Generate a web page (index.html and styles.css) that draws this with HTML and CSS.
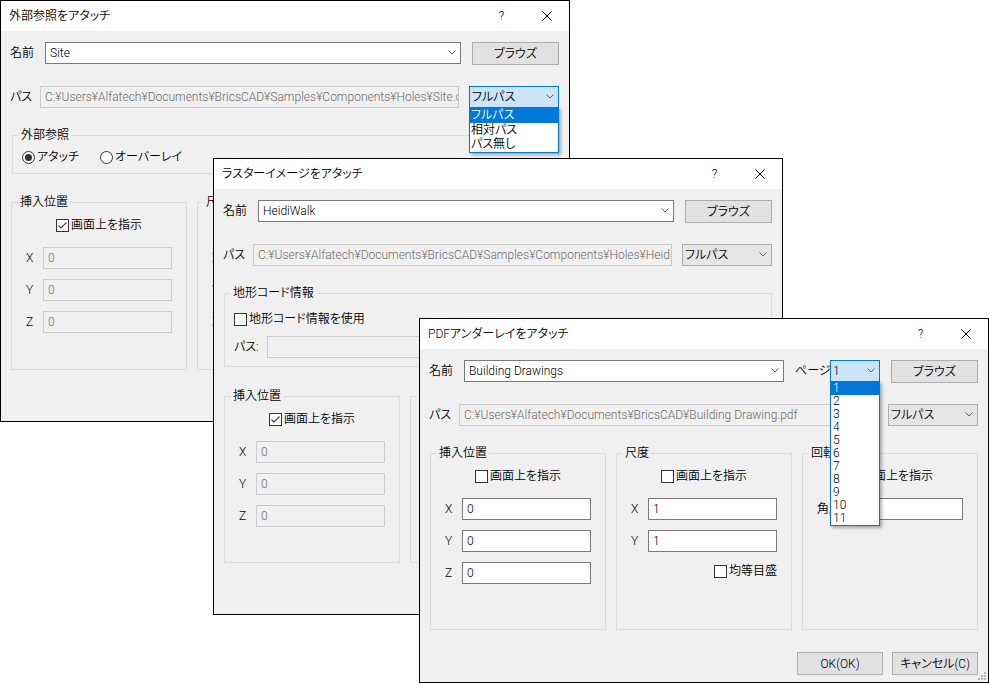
FILE: index.html
```html
<!DOCTYPE html>
<html lang="ja">
<head>
<meta charset="utf-8">
<title>アタッチ</title>
<link rel="stylesheet" href="styles.css">
</head>
<body>
<div class="desk">

<!-- Dialog 1 -->
<section class="dlg d1">
  <header class="tb">
    <span class="ttl">外部参照をアタッチ</span>
    <span class="help">?</span>
    <span class="close"><svg width="10" height="10" viewBox="0 0 10 10"><path d="M0.5 0.5L9.5 9.5M9.5 0.5L0.5 9.5" stroke="#000" stroke-width="1"/></svg></span>
  </header>
  <div class="bd">
    <div class="row">
      <span class="lbl l35">名前</span>
      <div class="combo w-name">Site<svg class="chev" width="8" height="5" viewBox="0 0 8 5"><polyline points="0.5,0.5 4,4 7.5,0.5" fill="none" stroke="#606060"/></svg></div>
      <button class="btn browse">ブラウズ</button>
    </div>
    <div class="row r2">
      <span class="lbl l30">パス</span>
      <div class="field dis w-path">C:¥Users¥Alfatech¥Documents¥BricsCAD¥Samples¥Components¥Holes¥Site.dwg</div>
      <div class="combo sel focus w-mode">フルパス<svg class="chev" width="8" height="5" viewBox="0 0 8 5"><polyline points="0.5,0.5 4,4 7.5,0.5" fill="none" stroke="#606060"/></svg>
        <ul class="list l-mode">
          <li class="on">フルパス</li>
          <li>相対パス</li>
          <li>パス無し</li>
        </ul>
      </div>
    </div>
    <fieldset class="grp g-xref">
      <legend>外部参照</legend>
      <div class="radios">
        <span class="opt o1"><i class="radio on"></i>アタッチ</span>
        <span class="opt"><i class="radio"></i>オーバーレイ</span>
      </div>
    </fieldset>
    <div class="grps">
      <fieldset class="grp">
        <legend>挿入位置</legend>
        <div class="chkrow"><span class="chk"><i class="box"><svg width="11" height="11" viewBox="0 0 11 11"><polyline points="1.5,5.5 4,8 9.5,2.5" fill="none" stroke="#444" stroke-width="1.2"/></svg></i>画面上を指示</span></div>
        <div class="frows">
          <div class="frow"><span class="flbl">X</span><div class="field dis w-num">0</div></div>
          <div class="frow"><span class="flbl">Y</span><div class="field dis w-num">0</div></div>
          <div class="frow"><span class="flbl">Z</span><div class="field dis w-num">0</div></div>
        </div>
      </fieldset>
      <fieldset class="grp">
        <legend>尺度</legend>
        <div class="chkrow"><span class="chk"><i class="box"><svg width="11" height="11" viewBox="0 0 11 11"><polyline points="1.5,5.5 4,8 9.5,2.5" fill="none" stroke="#444" stroke-width="1.2"/></svg></i>画面上を指示</span></div>
        <div class="frows">
          <div class="frow"><span class="flbl">X</span><div class="field dis w-num">1</div></div>
          <div class="frow"><span class="flbl">Y</span><div class="field dis w-num">1</div></div>
          <div class="frow"><span class="flbl">Z</span><div class="field dis w-num">1</div></div>
        </div>
      </fieldset>
      <fieldset class="grp">
        <legend>回転</legend>
        <div class="chkrow"><span class="chk"><i class="box"><svg width="11" height="11" viewBox="0 0 11 11"><polyline points="1.5,5.5 4,8 9.5,2.5" fill="none" stroke="#444" stroke-width="1.2"/></svg></i>画面上を指示</span></div>
        <div class="frows">
          <div class="frow"><span class="flbl wide">角度</span><div class="field dis w-ang">0</div></div>
        </div>
      </fieldset>
    </div>
  </div>
</section>

<!-- Dialog 2 -->
<section class="dlg d2">
  <header class="tb">
    <span class="ttl">ラスターイメージをアタッチ</span>
    <span class="help">?</span>
    <span class="close"><svg width="10" height="10" viewBox="0 0 10 10"><path d="M0.5 0.5L9.5 9.5M9.5 0.5L0.5 9.5" stroke="#000" stroke-width="1"/></svg></span>
  </header>
  <div class="bd">
    <div class="row">
      <span class="lbl l35">名前</span>
      <div class="combo w-name">HeidiWalk<svg class="chev" width="8" height="5" viewBox="0 0 8 5"><polyline points="0.5,0.5 4,4 7.5,0.5" fill="none" stroke="#606060"/></svg></div>
      <button class="btn browse">ブラウズ</button>
    </div>
    <div class="row r2">
      <span class="lbl l30">パス</span>
      <div class="field dis w-path">C:¥Users¥Alfatech¥Documents¥BricsCAD¥Samples¥Components¥Holes¥HeidiWalk.jpg</div>
      <div class="combo sel w-mode">フルパス<svg class="chev" width="8" height="5" viewBox="0 0 8 5"><polyline points="0.5,0.5 4,4 7.5,0.5" fill="none" stroke="#606060"/></svg></div>
    </div>
    <fieldset class="grp g-geo">
      <legend>地形コード情報</legend>
      <div class="georow"><span class="chk"><i class="box"></i>地形コード情報を使用</span></div>
      <div class="geo-path"><span class="lbl">パス:</span><div class="field dis gp-field"></div></div>
    </fieldset>
    <div class="grps">
      <fieldset class="grp">
        <legend>挿入位置</legend>
        <div class="chkrow"><span class="chk"><i class="box"><svg width="11" height="11" viewBox="0 0 11 11"><polyline points="1.5,5.5 4,8 9.5,2.5" fill="none" stroke="#444" stroke-width="1.2"/></svg></i>画面上を指示</span></div>
        <div class="frows">
          <div class="frow"><span class="flbl">X</span><div class="field dis w-num">0</div></div>
          <div class="frow"><span class="flbl">Y</span><div class="field dis w-num">0</div></div>
          <div class="frow"><span class="flbl">Z</span><div class="field dis w-num">0</div></div>
        </div>
      </fieldset>
      <fieldset class="grp">
        <legend>尺度</legend>
        <div class="chkrow"><span class="chk"><i class="box"><svg width="11" height="11" viewBox="0 0 11 11"><polyline points="1.5,5.5 4,8 9.5,2.5" fill="none" stroke="#444" stroke-width="1.2"/></svg></i>画面上を指示</span></div>
        <div class="frows">
          <div class="frow"><span class="flbl">X</span><div class="field dis w-num">1</div></div>
          <div class="frow"><span class="flbl">Y</span><div class="field dis w-num">1</div></div>
        </div>
      </fieldset>
      <fieldset class="grp">
        <legend>回転</legend>
        <div class="chkrow"><span class="chk"><i class="box"></i>画面上を指示</span></div>
        <div class="frows">
          <div class="frow"><span class="flbl wide">角度</span><div class="field w-ang">0</div></div>
        </div>
      </fieldset>
    </div>
  </div>
</section>

<!-- Dialog 3 -->
<section class="dlg d3">
  <header class="tb">
    <span class="ttl">PDFアンダーレイをアタッチ</span>
    <span class="help">?</span>
    <span class="close"><svg width="10" height="10" viewBox="0 0 10 10"><path d="M0.5 0.5L9.5 9.5M9.5 0.5L0.5 9.5" stroke="#000" stroke-width="1"/></svg></span>
  </header>
  <div class="bd">
    <div class="row">
      <span class="lbl l35">名前</span>
      <div class="combo w-name3">Building Drawings<svg class="chev" width="8" height="5" viewBox="0 0 8 5"><polyline points="0.5,0.5 4,4 7.5,0.5" fill="none" stroke="#606060"/></svg></div>
      <span class="lbl pg-lbl">ページ</span>
      <div class="combo sel focus w-page">1<svg class="chev" width="8" height="5" viewBox="0 0 8 5"><polyline points="0.5,0.5 4,4 7.5,0.5" fill="none" stroke="#606060"/></svg>
        <ul class="list l-page">
          <li class="on">1</li><li>2</li><li>3</li><li>4</li><li>5</li><li>6</li><li>7</li><li>8</li><li>9</li><li>10</li><li>11</li>
        </ul>
      </div>
      <button class="btn browse">ブラウズ</button>
    </div>
    <div class="row r2">
      <span class="lbl l30">パス</span>
      <div class="field dis w-path">C:¥Users¥Alfatech¥Documents¥BricsCAD¥Building Drawing.pdf</div>
      <div class="combo sel w-mode">フルパス<svg class="chev" width="8" height="5" viewBox="0 0 8 5"><polyline points="0.5,0.5 4,4 7.5,0.5" fill="none" stroke="#606060"/></svg></div>
    </div>
    <div class="grps">
      <fieldset class="grp">
        <legend>挿入位置</legend>
        <div class="chkrow"><span class="chk"><i class="box"></i>画面上を指示</span></div>
        <div class="frows">
          <div class="frow"><span class="flbl">X</span><div class="field w-num">0</div></div>
          <div class="frow"><span class="flbl">Y</span><div class="field w-num">0</div></div>
          <div class="frow"><span class="flbl">Z</span><div class="field w-num">0</div></div>
        </div>
      </fieldset>
      <fieldset class="grp">
        <legend>尺度</legend>
        <div class="chkrow"><span class="chk"><i class="box"></i>画面上を指示</span></div>
        <div class="frows">
          <div class="frow"><span class="flbl">X</span><div class="field w-num">1</div></div>
          <div class="frow"><span class="flbl">Y</span><div class="field w-num">1</div></div>
        </div>
        <div class="uni"><span class="chk"><i class="box"></i>均等目盛</span></div>
      </fieldset>
      <fieldset class="grp">
        <legend>回転</legend>
        <div class="chkrow"><span class="chk"><i class="box"></i>画面上を指示</span></div>
        <div class="frows">
          <div class="frow"><span class="flbl wide">角度</span><div class="field w-ang">0</div></div>
        </div>
      </fieldset>
    </div>
    <div class="btns">
      <button class="btn">OK(OK)</button>
      <button class="btn">キャンセル(C)</button>
    </div>
  </div>
  <svg class="grip" width="8" height="8" viewBox="0 0 8 8">
    <rect x="6" y="0" width="2" height="2" fill="#b4b4b4"/>
    <rect x="3" y="3" width="2" height="2" fill="#b4b4b4"/>
    <rect x="6" y="3" width="2" height="2" fill="#b4b4b4"/>
    <rect x="0" y="6" width="2" height="2" fill="#b4b4b4"/>
    <rect x="3" y="6" width="2" height="2" fill="#b4b4b4"/>
    <rect x="6" y="6" width="2" height="2" fill="#b4b4b4"/>
  </svg>
</section>

</div>
</body>
</html>
```

FILE: styles.css
```css
* { box-sizing: border-box; }
html, body { margin: 0; padding: 0; background: #fff; }
body {
  font-family: Roboto, "Noto Sans CJK JP", sans-serif;
  font-size: 12px;
  font-weight: 350;
  line-height: 16px;
  color: #000;
  font-feature-settings: "palt";
}
.desk { position: relative; width: 990px; height: 684px; overflow: hidden; background: #fff; }

.dlg { position: absolute; width: 570px; border: 1px solid #000; background: #f0f0f0; }
.d1 { left: 0; top: 0; height: 422px; }
.d2 { left: 213px; top: 158px; height: 457px; }
.d3 { left: 419px; top: 318px; height: 365px; }

.tb { height: 30px; background: #fff; display: flex; align-items: center; padding-left: 8px; }
.ttl { flex: 1; white-space: nowrap; }
.help, .close { width: 45px; height: 30px; display: flex; align-items: center; justify-content: center; }

.bd { padding: 11px 10px 0 9px; }
.row { display: flex; align-items: flex-start; }
.r2 { margin-top: 21px; }
.lbl { height: 22px; line-height: 22px; flex: none; white-space: nowrap; }
.l35 { width: 35px; }
.l30 { width: 30px; }

.combo {
  position: relative; flex: none;
  height: 22px; line-height: 20px;
  border: 1px solid #7a7a7a; background: #fff;
  padding-left: 4px; white-space: nowrap;
}
.combo .chev { position: absolute; right: 4px; top: 7px; }
.combo.sel { background: #e5e5e5; border-color: #adadad; padding-left: 2px; }
.combo.focus { background: #cce4f7; border-color: #0078d7; }

.btn {
  font: inherit; color: #000; flex: none;
  height: 23px; padding: 0;
  border: 1px solid #adadad; background: #e1e1e1;
}
.browse { width: 87px; margin-left: 11px; }

.field {
  flex: none; height: 22px; line-height: 20px;
  border: 1px solid #7a7a7a; background: #fff;
  padding-left: 4px; white-space: nowrap; overflow: hidden;
}
.field.dis { border-color: #cccccc; background: #f0f0f0; color: #6d6d6d; }

.w-name { width: 416px; }
.w-name3 { width: 320px; }
.w-path { width: 419px; }
.w-mode { width: 90px; margin-left: 10px; }
.pg-lbl { width: 35px; margin-left: 11px; }
.w-page { width: 50px; padding-left: 4px; }
.w-num { width: 129px; }
.w-ang { width: 113px; }

.list {
  position: absolute; left: -1px; top: 20px; z-index: 5;
  margin: 0; padding: 0; list-style: none;
  background: #fff; border: 1px solid #0078d7;
  box-shadow: 2px 2px 3px rgba(0, 0, 0, 0.3);
  color: #000;
}
.list li { padding-left: 1px; }
.list li.on { background: #0078d7; color: #fff; }
.l-mode { width: 90px; }
.l-mode li { height: 14.67px; line-height: 14px; }
.l-page { width: 50px; }
.l-page li { height: 13px; line-height: 13px; padding-left: 2px; }

.grp { margin: 0; padding: 0; border: 1px solid #dcdcdc; min-width: 0; }
.grp legend { padding: 0 2px; margin-left: 6px; line-height: 16px; white-space: nowrap; }

.g-xref { margin: 19px 0 0 2px; padding: 6px 0 8px 9px; }
.g-xref legend { margin-left: -3px; }
.radios { display: flex; align-items: center; height: 16px; }
.opt { display: flex; align-items: center; white-space: nowrap; }
.o1 { width: 78px; }
.radio {
  width: 13px; height: 13px; margin-right: 2px; flex: none;
  border: 1px solid #333; border-radius: 50%; background: #fff;
  display: flex; align-items: center; justify-content: center;
}
.radio.on::after { content: ""; width: 7px; height: 7px; border-radius: 50%; background: #333; }

.chk { display: flex; align-items: center; white-space: nowrap; }
.box {
  width: 13px; height: 13px; margin-right: 2px; flex: none;
  border: 1px solid #333; background: #fff;
  display: flex; align-items: center; justify-content: center;
}

.grps {
  display: grid; grid-template-columns: 176px 176px 176px; column-gap: 10px;
  margin-left: 1px; margin-top: 19px;
}
.d1 .grps { margin-top: 20px; }
.d2 .grps { margin-top: 21px; }
.grps .grp { padding-top: 7px; }
.d1 .grps .grp { height: 176px; }
.d2 .grps .grp { height: 175px; }
.d3 .grps .grp { height: 185px; }

.chkrow { display: flex; justify-content: center; align-items: center; height: 16px; }
.frows { margin-top: 14px; display: flex; flex-direction: column; gap: 10px; }
.frow { display: flex; align-items: center; padding-left: 14px; }
.flbl { width: 17px; flex: none; }
.flbl.wide { width: 33px; }
.uni { display: flex; justify-content: flex-end; padding-right: 14px; margin-top: 11px; height: 16px; }

.g-geo { margin: 19px 0 0 1px; padding: 10px 10px 8px 9px; }
.g-geo legend { margin-left: -3px; }
.georow { display: flex; align-items: center; height: 16px; }
.geo-path { display: flex; margin-top: 9px; }
.geo-path .lbl { width: 33px; }
.gp-field { flex: 1; }

.btns { display: flex; justify-content: flex-end; gap: 9px; margin-top: 22px; }
.btns .btn { width: 86px; }

.grip { position: absolute; right: 2px; bottom: 2px; }
```
